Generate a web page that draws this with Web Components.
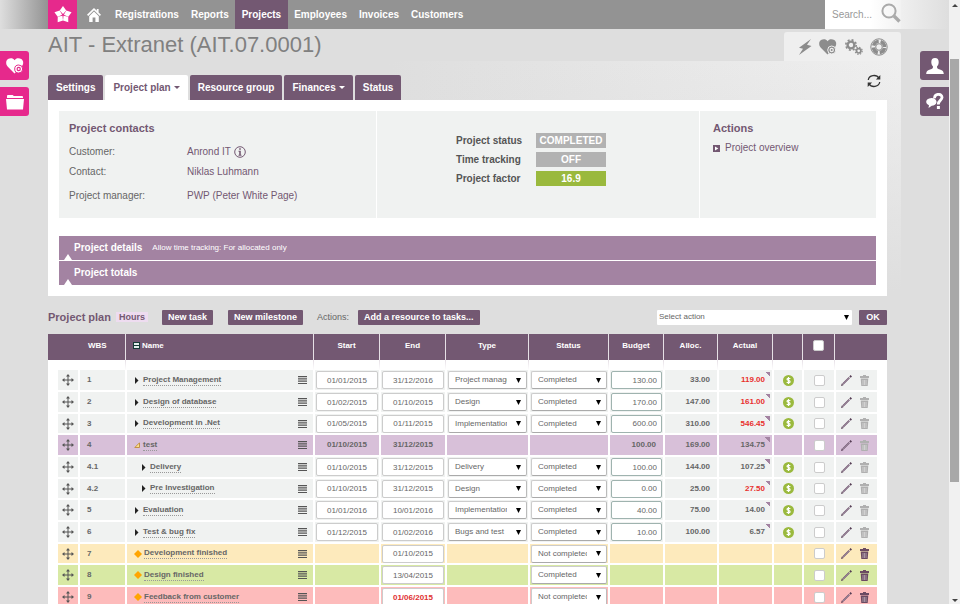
<!DOCTYPE html>
<html lang="en">
<head>
<meta charset="utf-8">
<title>AIT - Extranet (AIT.07.0001)</title>
<style>
    body {
        margin: 0;
        height: 100vh;
        overflow: hidden;
        background: #dedede;
        color: #666;
        font: 9px/12px "Liberation Sans", Arial, sans-serif;
        --purple: #735872;
        --mauve: #a383a2;
        --pink: #e6298c;
        --cell: #f0f2f1;
    }
</style>
</head>
<body>
<project-page></project-page>

<script>
const ICONS = {
    flower: ['-10 -10 20 20', '<g fill="#fff">' + [0, 72, 144, 216, 288].map(a =>
        `<path transform="rotate(${a})" d="M0-1L-3.600-5L0-10L3.600-5z"/>`).join('') + '</g>'],
    home: ['0 0 14 14', '<path fill="currentColor" d="M7 0L0 6.7L1.2 7.9L7 2.3L12.8 7.9L14 6.7L11.6 4.4V1H9.8V2.7zM7 3.6L2.2 8.2V14H5.6V9.6H8.4V14H11.8V8.2z"/>'],
    search: ['0 0 20 20', '<g fill="none" stroke="#aaa"><circle cx="8" cy="8" r="6.6" stroke-width="2"/><path d="M13 13L18.5 18.5" stroke-width="3.4"/></g>'],
    heart: ['0 0 18 16', '<path fill="currentColor" d="M8.5 15.5L1.6 8.5C-.5 6-.2 2.600 2 1.100C4.300-.3 7-.1 8.500 2.200C10-.1 13-.4 15.300 1.100C17.300 2.500 17.700 5 16.600 7.200z"/><circle cx="12.700" cy="11" r="4" fill="currentColor" stroke="var(--back)" stroke-width="1"/><circle cx="12.700" cy="11" r="1.600" fill="none" stroke="var(--back)" stroke-width="1.200"/>'],
    folder: ['0 0 18 16', '<path fill="currentColor" d="M1 3V1.800Q1 1 2 1H6.500Q7.500 1 7.500 2H16Q17 2 17 3V4H1zM0 5H18L17 15.500H1z"/>'],
    bolt: ['0 0 14 16', '<path fill="currentColor" d="M13 0L1 8.800L5 9.800L1 16L13.500 7L9 5.800z"/>'],
    gears: ['0 0 18 16', '<g fill="none" stroke="currentColor"><circle cx="6" cy="6" r="3.400" stroke-width="2.400"/><circle cx="6" cy="6" r="5.200" stroke-width="1.600" stroke-dasharray="2 2.080"/><circle cx="13.700" cy="11.800" r="2.200" stroke-width="1.700"/><circle cx="13.700" cy="11.800" r="3.500" stroke-width="1.200" stroke-dasharray="1.400 1.350"/></g>'],
    lifebuoy: ['0 0 18 18', '<g fill="none" stroke="currentColor"><circle cx="9" cy="9" r="8.200" stroke-width="1"/><circle cx="9" cy="9" r="3.300" stroke-width="1"/><circle cx="9" cy="9" r="5.600" stroke-width="3.400" stroke-dasharray="6.800 1.996" stroke-dashoffset="-1"/></g>'],
    refresh: ['0 0 14 14', '<g fill="none" stroke="#333" stroke-width="1.300"><path d="M1.300 6A5.700 5 0 0 1 12 4.200M12.700 8A5.700 5 0 0 1 2 9.800"/></g><path fill="#333" d="M13.300 1V5.400H8.900zM.7 13V8.600H5.100z"/>'],
    person: ['0 0 18 16', '<path fill="currentColor" d="M9 0C11.500 0 12.800 1.600 12.700 4.200C12.600 6.500 11.800 7.600 11 8.500C11 10 11.300 10.600 13 11.200C16 12.200 17.600 12.700 17.800 16H.2C.4 12.700 2 12.200 5 11.200C6.700 10.600 7 10 7 8.500C6.200 7.600 5.400 6.500 5.300 4.200C5.200 1.600 6.500 0 9 0z"/>'],
    help: ['0 0 18 17', '<path fill="none" stroke="currentColor" stroke-width="2.800" d="M8.600 5.400C8 0 16.400.2 16 4.700C15.700 7.600 12.300 7.400 12.300 11.400"/><rect x="10.900" y="13" width="3" height="3" fill="currentColor"/><path fill="currentColor" d="M5.500 5C9 5 10.700 7 10.500 9.200C10.300 11.500 8 12.700 5.800 12.700L2.500 15L3 12.300C-1.300 10.700-.8 5.200 5.500 5z"/>'],
    info: ['0 0 12 12', '<circle cx="6" cy="6" r="5.300" fill="none" stroke="#735872" stroke-width="1"/><path fill="#735872" d="M5.200 2.300H6.800V3.800H5.200zM4.500 4.800H6.800V8.800H7.500V9.700H4.500V8.800H5.200V5.700H4.500z"/>'],
    play: ['0 0 7 7', '<path fill="#735872" d="M0 0H7V7H0z"/><path fill="#fff" d="M2 1.400V5.600L5.300 3.500z"/>'],
    move: ['0 0 12 12', '<path fill="none" stroke="#555" stroke-width="1" d="M6 1V11M1 6H11"/><path fill="#555" d="M6 0L8 2.500H4zM6 12L4 9.500H8zM0 6L2.500 4V8zM12 6L9.500 8V4z"/>'],
    menu: ['0 0 9 8', '<path fill="#555" d="M0 0H9V1.200H0zM0 2.300H9V3.500H0zM0 4.600H9V5.800H0zM0 6.900H9V8H0z"/>'],
    closed: ['0 0 5 7', '<path fill="#222" d="M1 0L4.500 3.500L1 7z"/>'],
    open: ['0 0 6 6', '<path fill="#fbe08a" stroke="#c08a3a" stroke-width=".9" d="M5.500.8V5.500H.8z"/>'],
    milestone: ['0 0 8 8', '<path fill="#ffa500" d="M4 0L8 4L4 8L0 4z"/>'],
    collapse: ['0 0 7 7', '<path fill="#173b36" d="M0 0H7V7H0z"/><path fill="#e3efec" d="M1 1H6V3H1zM1 4H6V6H1z"/>'],
    dollar: ['0 0 11 11', '<circle cx="5.500" cy="5.500" r="5.500" fill="#9ab93d"/><path fill="none" stroke="#fff" stroke-width="1.200" d="M7.300 3.900C6.600 3 4 3 4 4.300C4 5.800 7.100 5.100 7.100 6.700C7.100 8 4.400 8 3.700 7M5.500 2V9"/>'],
    pencil: ['0 0 11 11', '<path fill="none" stroke="#735872" stroke-width="1.800" d="M1.800 9.200L8.300 2.700"/><path fill="none" stroke="#b9a9b8" stroke-width=".5" d="M2 9L8 3"/><path fill="#553d54" d="M0 11L.8 8.600L2.400 10.200zM8.300 1.400L9.600 0L11 1.400L9.700 2.700z"/>'],
    trash: ['0 0 9 11', '<path fill="currentColor" d="M3 0H6V1H9V3H0V1H3zM.7 3.600H8.300L7.700 11H1.300z"/><path fill="none" stroke="#fff" stroke-opacity=".6" stroke-width=".7" d="M3 5V10M4.500 5V10M6 5V10"/>']
};

class AppIcon extends HTMLElement {
    constructor() {
        super();
        this.attachShadow({ mode: 'open' });
    }

    connectedCallback() {
        const [box, shapes] = ICONS[this.getAttribute('name')];
        const [, , w, h] = box.split(' ');
        this.shadowRoot.innerHTML = `
            <style>
                :host { display: inline-block; flex: none; }
                svg { display: block; }
            </style>
            <svg width="${this.getAttribute('width') || w}" height="${this.getAttribute('height') || h}" viewBox="${box}" aria-hidden="true">${shapes}</svg>
        `;
    }
}

class TopNav extends HTMLElement {
    constructor() {
        super();
        this.attachShadow({ mode: 'open' });
        this.shadowRoot.innerHTML = `
            <style>
                :host {
                    display: flex;
                    height: 29px;
                    padding: 0 48px;
                    background:
                        linear-gradient(to right, #efefef, #dedede) right / 48px 100% no-repeat,
                        linear-gradient(to right, #dedede, #939393 48px);
                }
                nav { display: flex; flex: 1; }
                a {
                    display: flex;
                    align-items: center;
                    padding: 0 6px;
                    color: #fff;
                    font-size: 10px;
                    font-weight: bold;
                    text-decoration: none;
                }
                a.logo { background: var(--pink); width: 29px; padding: 0; justify-content: center; }
                a.home { padding: 0 8px 0 10px; }
                a.current { background: var(--purple); padding: 0 7px; }
                form {
                    display: flex;
                    align-items: center;
                    width: 76px;
                    background: linear-gradient(to right, #fff 60%, #f2f2f2);
                }
                input {
                    flex: 1;
                    min-width: 0;
                    border: 0;
                    padding: 0 0 0 7px;
                    background: none;
                    font: inherit;
                    font-size: 10px;
                    outline: 0;
                }
                input::placeholder { color: #999; }
                button { border: 0; padding: 0; background: none; }
            </style>
            <nav>
                <a class="logo" href="#" aria-label="Start"><app-icon name="flower" width="18" height="18"></app-icon></a>
                <a class="home" href="#" aria-label="Home"><app-icon name="home"></app-icon></a>
                <a href="#">Registrations</a>
                <a href="#">Reports</a>
                <a href="#" class="current">Projects</a>
                <a href="#">Employees</a>
                <a href="#">Invoices</a>
                <a href="#">Customers</a>
            </nav>
            <form>
                <input type="text" placeholder="Search..." aria-label="Search">
                <button type="button" aria-label="Search"><app-icon name="search"></app-icon></button>
            </form>
        `;
    }
}

class SideRail extends HTMLElement {
    constructor() {
        super();
        this.attachShadow({ mode: 'open' });
        this.shadowRoot.innerHTML = `
            <style>
                :host {
                    display: flex;
                    flex-direction: column;
                    gap: 7px;
                    width: 48px;
                    padding-top: 22px;
                    --back: var(--pink);
                    --round: 0 3px 3px 0;
                }
                :host([side="right"]) { align-items: flex-end; --back: var(--purple); --round: 3px 0 0 3px; }
                ::slotted(button) {
                    display: flex;
                    align-items: center;
                    justify-content: center;
                    width: 29px;
                    height: 29px;
                    padding: 0;
                    border: 0;
                    border-radius: var(--round);
                    background: var(--back);
                    color: #fff;
                }
            </style>
            <slot></slot>
        `;
    }
}

class PageTabs extends HTMLElement {
    constructor() {
        super();
        this.attachShadow({ mode: 'open' });
        this.shadowRoot.innerHTML = `
            <style>
                :host { display: flex; gap: 2px; }
                ::slotted(a) {
                    padding: 0 8px;
                    border-radius: 2px 2px 0 0;
                    background: var(--purple);
                    color: #fff;
                    font-size: 10px;
                    font-weight: bold;
                    line-height: 25px;
                    text-decoration: none;
                }
                ::slotted(a.current) { background: #fff; color: var(--purple); }
                ::slotted(a.menu)::after {
                    content: "";
                    display: inline-block;
                    margin-left: 3px;
                    border: 3px solid transparent;
                    border-top-color: currentColor;
                    border-bottom: 0;
                    vertical-align: 2px;
                }
            </style>
            <slot></slot>
        `;
    }
}

class ProjectSummary extends HTMLElement {
    constructor() {
        super();
        this.attachShadow({ mode: 'open' });
        this.shadowRoot.innerHTML = `
            <style>
                :host { display: grid; grid-template-columns: 317fr 322fr 176fr; gap: 1px; }
                section { background: var(--cell); padding: 10px 10px 8px; }
                section:last-child { padding-left: 13px; }
                h2 { margin: 0; color: var(--purple); font-size: 11px; line-height: 14px; }
                dl { display: grid; margin: 0; align-items: center; }
                dd { margin: 0; }
                .contacts dl {
                    grid-template-columns: 118px 1fr;
                    grid-template-rows: 20px 20px 28px;
                    margin-top: 7px;
                    font-size: 10px;
                }
                .contacts dd { display: flex; gap: 3px; align-items: center; color: var(--purple); }
                .state dl {
                    grid-template-columns: 80px 70px;
                    gap: 4px 0;
                    margin: 12px 0 0 69px;
                    font-size: 10px;
                    font-weight: bold;
                }
                .state dt { color: #555; white-space: nowrap; }
                .state dd { background: #b2b2b2; color: #fff; line-height: 15px; text-align: center; }
                .state dd.good { background: #9ab93d; }
                a { display: flex; gap: 5px; align-items: center; margin-top: 7px; color: var(--purple); font-size: 10px; text-decoration: none; white-space: nowrap; }
            </style>
            <section class="contacts">
                <h2>Project contacts</h2>
                <dl>
                    <dt>Customer:</dt><dd>Anrond IT <app-icon name="info"></app-icon></dd>
                    <dt>Contact:</dt><dd>Niklas Luhmann</dd>
                    <dt>Project manager:</dt><dd>PWP (Peter White Page)</dd>
                </dl>
            </section>
            <section class="state">
                <dl>
                    <dt>Project status</dt><dd>COMPLETED</dd>
                    <dt>Time tracking</dt><dd>OFF</dd>
                    <dt>Project factor</dt><dd class="good">16.9</dd>
                </dl>
            </section>
            <section>
                <h2>Actions</h2>
                <a href="#"><app-icon name="play"></app-icon>Project overview</a>
            </section>
        `;
    }
}

class FoldBar extends HTMLElement {
    constructor() {
        super();
        this.attachShadow({ mode: 'open' });
        this.shadowRoot.innerHTML = `
            <style>
                :host { display: block; }
                button {
                    display: flex;
                    align-items: center;
                    gap: 10px;
                    position: relative;
                    width: 100%;
                    height: 24px;
                    padding: 0 15px;
                    border: 0;
                    background: var(--mauve);
                    color: #fff;
                    font: inherit;
                    font-size: 8px;
                }
                b { font-size: 10px; }
                button::after {
                    content: "";
                    position: absolute;
                    left: 5px;
                    bottom: 0;
                    border: 4px solid transparent;
                    border-bottom: 6px solid #fff;
                    border-top: 0;
                }
            </style>
            <button type="button"><b></b><slot></slot></button>
        `;
    }

    connectedCallback() {
        this.shadowRoot.querySelector('b').textContent = this.getAttribute('heading');
    }
}

class PlanToolbar extends HTMLElement {
    constructor() {
        super();
        this.attachShadow({ mode: 'open' });
        this.shadowRoot.innerHTML = `
            <style>
                :host { display: flex; align-items: center; height: 38px; padding-top: 4px; box-sizing: border-box; }
                h2 { margin: 0 5px 0 0; color: var(--purple); font-size: 11px; }
                .unit { padding: 0 3px; background: #eedcf0; color: var(--purple); font-size: 9px; font-weight: bold; line-height: 10px; }
                button {
                    min-width: 28px;
                    height: 15px;
                    padding: 0 6px;
                    border: 0;
                    border-radius: 1px;
                    background: var(--purple);
                    color: #fff;
                    font: bold 9px/15px "Liberation Sans", Arial, sans-serif;
                }
                .unit + button { margin: 0 15px 0 14px; }
                label { margin: 0 9px 0 14px; font-size: 9px; }
                select {
                    width: 195px;
                    height: 15px;
                    margin: 0 7px 0 auto;
                    padding: 0 14px 0 2px;
                    border: 0;
                    border-radius: 1px;
                    appearance: none;
                    color: #666;
                    font: inherit;
                    font-size: 8px;
                    background: #fff url("data:image/svg+xml,%3Csvg xmlns='http://www.w3.org/2000/svg' width='5' height='5'%3E%3Cpath d='M0 0H5L2.5 5z'/%3E%3C/svg%3E") right 3px center no-repeat;
                }
            </style>
            <h2>Project plan</h2>
            <span class="unit">Hours</span>
            <button type="button">New task</button>
            <button type="button">New milestone</button>
            <label for="add">Actions:</label>
            <button type="button" id="add">Add a resource to tasks...</button>
            <select aria-label="Select action"><option>Select action</option></select>
            <button type="button">OK</button>
        `;
    }
}

const TASKS = [
    { wbs: '1', name: 'Project Management', start: '01/01/2015', end: '31/12/2016', type: 'Project management', status: 'Completed', budget: '130.00', alloc: '33.00', actual: '119.00', over: true },
    { wbs: '2', name: 'Design of database', start: '01/02/2015', end: '01/10/2015', type: 'Design', status: 'Completed', budget: '170.00', alloc: '147.00', actual: '161.00', over: true },
    { wbs: '3', name: 'Development in .Net', start: '01/05/2015', end: '01/11/2015', type: 'Implementation', status: 'Completed', budget: '600.00', alloc: '310.00', actual: '546.45', over: true },
    { wbs: '4', name: 'test', kind: 'group', start: '01/10/2015', end: '31/12/2015', budget: '100.00', alloc: '169.00', actual: '134.75' },
    { wbs: '4.1', name: 'Delivery', child: true, start: '01/10/2015', end: '31/12/2015', type: 'Delivery', status: 'Completed', budget: '100.00', alloc: '144.00', actual: '107.25' },
    { wbs: '4.2', name: 'Pre Investigation', child: true, start: '01/10/2015', end: '31/12/2015', type: 'Design', status: 'Completed', budget: '0.00', alloc: '25.00', actual: '27.50', over: true },
    { wbs: '5', name: 'Evaluation', start: '01/01/2016', end: '10/01/2016', type: 'Implementation', status: 'Completed', budget: '40.00', alloc: '75.00', actual: '14.00' },
    { wbs: '6', name: 'Test & bug fix', start: '01/12/2015', end: '01/02/2016', type: 'Bugs and test', status: 'Completed', budget: '10.00', alloc: '100.00', actual: '6.57' },
    { wbs: '7', name: 'Development finished', kind: 'pending', end: '01/10/2015', status: 'Not completed' },
    { wbs: '8', name: 'Design finished', kind: 'done', end: '13/04/2015', status: 'Completed' },
    { wbs: '9', name: 'Feedback from customer', kind: 'late', end: '01/06/2015', status: 'Not completed' }
];

class PlanTable extends HTMLElement {
    constructor() {
        super();
        this.attachShadow({ mode: 'open' });
        this.shadowRoot.innerHTML = `
            <style>
                :host { display: block; background: #fff; padding-bottom: 10px; }
                table { width: 100%; table-layout: fixed; border-spacing: 0; font-size: 8px; font-weight: bold; }
                th, td { box-sizing: border-box; padding: 0; background-clip: padding-box; }
                th {
                    height: 36px;
                    border-left: 1px solid #e6e0e6;
                    border-bottom: 10px solid #fff;
                    background-color: var(--purple);
                    color: #fff;
                    padding-bottom: 3px;
                }
                th:first-child { border-left: 0; padding-left: 40px; text-align: left; }
                th.name { text-align: left; padding-left: 7px; }
                th.name app-icon { margin-right: 2px; vertical-align: -1px; }
                td { height: 22px; border: solid #fff; border-width: 0 0 2px 2px; background-color: var(--cell); line-height: 12px; }
                tr:nth-child(3n) td { height: 21px; }
                td.edge { border: 0; background: #fff; }
                td.edge + td { border-left: 0; }
                .group td:not(.edge) { background-color: #d8c0d9; }
                .pending td:not(.edge) { background-color: #fdeabc; }
                .done td:not(.edge) { background-color: #d8e9a4; }
                .late td:not(.edge) { background-color: #fdbbbb; }
                .late input[type="text"] { color: #e03030; font-weight: bold; }
                .drag, .pay, .pick, .date { text-align: center; }
                .drag app-icon, .pay app-icon { display: block; width: min-content; margin: 0 auto; }
                .wbs { padding-left: 7px; }
                .title { display: flex; align-items: center; padding: 0 6px 0 7px; }
                .title app-icon { width: 9px; }
                .child .title { padding-left: 14px; }
                .title a { border-bottom: 1px dotted #999; color: #666; line-height: 10px; text-decoration: none; }
                .pending a, .done a, .late a { margin-left: 1px; }
                .title button { margin-left: auto; }
                .num { text-align: right; padding-right: 7px; }
                .over { color: #e8302e; }
                .actual {
                    background-image: linear-gradient(to bottom left, var(--mauve) 50%, transparent 50%);
                    background-position: right 2px top 2px;
                    background-size: 5px 5px;
                    background-repeat: no-repeat;
                }
                input[type="text"], select {
                    display: block;
                    box-sizing: border-box;
                    width: calc(100% - 2px);
                    height: 18px;
                    margin: 0 1px;
                    padding: 0 4px;
                    border: 1px solid #ccc;
                    border-radius: 2px;
                    background: #fff;
                    color: #666;
                    font: inherit;
                    font-weight: normal;
                    text-align: center;
                }
                .budget input[type="text"] { border-color: #9fb3af; text-align: right; }
                select {
                    appearance: none;
                    padding: 0 19px 0 6px;
                    border-bottom-color: #aaa;
                    border-right-color: #bbb;
                    text-align: left;
                    background: #fff url("data:image/svg+xml,%3Csvg xmlns='http://www.w3.org/2000/svg' width='5' height='5'%3E%3Cpath d='M0 0H5L2.5 5z'/%3E%3C/svg%3E") right 5px center no-repeat;
                }
                input[type="checkbox"] {
                    display: block;
                    appearance: none;
                    width: 11px;
                    height: 11px;
                    margin: 0 auto;
                    border: 1px solid #ccc;
                    border-radius: 2px;
                    background: #fff;
                }
                button { display: inline-flex; padding: 0; border: 0; background: none; color: #b0b0b0; }
                .pending button, .done button, .late button { color: #6b4a62; }
                .tools div { display: flex; justify-content: space-between; padding: 0 8px 0 5px; }
            </style>
            <table>
                <colgroup>
                    <col width="10"><col width="20"><col width="47"><col><col width="66"><col width="66">
                    <col width="83"><col width="80"><col width="55"><col width="54"><col width="55">
                    <col width="30"><col width="32"><col width="43"><col width="10">
                </colgroup>
                <thead>
                    <tr>
                        <th colspan="3">WBS</th>
                        <th class="name"><app-icon name="collapse"></app-icon>Name</th>
                        <th>Start</th><th>End</th><th>Type</th><th>Status</th>
                        <th>Budget</th><th>Alloc.</th><th>Actual</th><th></th>
                        <th><input type="checkbox" aria-label="Select all"></th>
                        <th colspan="2"></th>
                    </tr>
                </thead>
                <tbody></tbody>
            </table>
        `;
    }

    connectedCallback() {
        this.shadowRoot.querySelector('tbody').innerHTML = TASKS.map(task => this.row(task)).join('');
    }

    row(task) {
        const milestone = !task.start;
        const group = task.kind === 'group';
        const marker = milestone ? 'milestone' : group ? 'open' : 'closed';
        const text = (value, label) => !value ? '' : group ? value :
            `<input type="text" value="${value}" aria-label="${label}">`;
        const list = (value, label) => value ?
            `<select aria-label="${label}"><option>${value}</option></select>` : '';

        return `
            <tr class="${task.kind || ''} ${task.child ? 'child' : ''}">
                <td class="edge"></td>
                <td class="drag"><app-icon name="move"></app-icon></td>
                <td class="wbs">${task.wbs}</td>
                <td><div class="title">
                    <app-icon name="${marker}"></app-icon>
                    <a href="#">${task.name.replace('&', '&amp;')}</a>
                    <button type="button" aria-label="Menu"><app-icon name="menu"></app-icon></button>
                </div></td>
                <td class="date">${text(task.start, 'Start')}</td>
                <td class="date">${text(task.end, 'End')}</td>
                <td>${list(task.type, 'Type')}</td>
                <td>${list(task.status, 'Status')}</td>
                <td class="budget ${group ? 'num' : ''}">${text(task.budget, 'Budget')}</td>
                <td class="num">${task.alloc || ''}</td>
                <td class="num ${milestone ? '' : 'actual'} ${task.over ? 'over' : ''}">${task.actual || ''}</td>
                <td class="pay">${milestone || group ? '' : '<app-icon name="dollar"></app-icon>'}</td>
                <td class="pick"><input type="checkbox" aria-label="Select ${task.wbs}"></td>
                <td class="tools"><div>
                    <button type="button" aria-label="Edit"><app-icon name="pencil"></app-icon></button>
                    <button type="button" aria-label="Delete"><app-icon name="trash"></app-icon></button>
                </div></td>
                <td class="edge"></td>
            </tr>
        `;
    }
}

class PageScrollbar extends HTMLElement {
    constructor() {
        super();
        this.attachShadow({ mode: 'open' });
        this.shadowRoot.innerHTML = `
            <style>
                :host { display: flex; flex-direction: column; align-items: center; width: 11px; background: #f1f1f1; }
                i { border: 3px solid transparent; }
                .up { border-bottom-color: #444; border-top: 0; margin: 4px 0 52px; }
                .down { border-top-color: #444; border-bottom: 0; margin: auto 0 2px; }
                .thumb { width: 9px; height: 70%; background: #a8a8a8; }
            </style>
            <i class="up"></i>
            <div class="thumb"></div>
            <i class="down"></i>
        `;
    }
}

class ProjectPage extends HTMLElement {
    constructor() {
        super();
        this.attachShadow({ mode: 'open' });
        this.shadowRoot.innerHTML = `
            <style>
                :host { display: flex; height: 100%; }
                .page { flex: 1; min-width: 0; overflow: hidden; }
                .columns { display: flex; }
                main { flex: 1; min-width: 0; }
                header { display: flex; justify-content: space-between; align-items: flex-end; height: 32px; }
                h1 { margin: 0; color: #808080; font-size: 22px; font-weight: normal; line-height: 32px; }
                .tools {
                    display: flex;
                    align-items: center;
                    justify-content: space-between;
                    box-sizing: border-box;
                    width: 117px;
                    height: 29px;
                    padding: 0 13px 0 14px;
                    border-radius: 3px 3px 0 0;
                    background: #efefef;
                    color: #8c8c8c;
                    --back: #efefef;
                }
                .tools button, .refresh { display: flex; padding: 0; border: 0; background: none; color: inherit; }
                .band {
                    padding: 14px 14px 0 0;
                    background:
                        linear-gradient(to bottom, #dedede00, #dedede 230px),
                        linear-gradient(to right, #dedede 40%, #efefef);
                }
                .head { display: flex; justify-content: space-between; }
                .refresh { margin: -1px 6px 0 0; }
                .panel { padding: 11px 11px 11px; background: #fff; }
                fold-bar { margin-top: 1px; }
                project-summary + fold-bar { margin-top: 18px; }
            </style>
            <div class="page">
                <top-nav></top-nav>
                <div class="columns">
                    <side-rail>
                        <button type="button" aria-label="Favourites"><app-icon name="heart"></app-icon></button>
                        <button type="button" aria-label="Files"><app-icon name="folder"></app-icon></button>
                    </side-rail>
                    <main>
                        <header>
                            <h1>AIT - Extranet (AIT.07.0001)</h1>
                            <div class="tools">
                                <button type="button" aria-label="Quick"><app-icon name="bolt"></app-icon></button>
                                <button type="button" aria-label="Favourite"><app-icon name="heart"></app-icon></button>
                                <button type="button" aria-label="Settings"><app-icon name="gears"></app-icon></button>
                                <button type="button" aria-label="Help"><app-icon name="lifebuoy"></app-icon></button>
                            </div>
                        </header>
                        <div class="band">
                            <div class="head">
                                <page-tabs>
                                    <a href="#">Settings</a>
                                    <a href="#" class="current menu">Project plan</a>
                                    <a href="#">Resource group</a>
                                    <a href="#" class="menu">Finances</a>
                                    <a href="#">Status</a>
                                </page-tabs>
                                <button type="button" class="refresh" aria-label="Refresh"><app-icon name="refresh"></app-icon></button>
                            </div>
                            <div class="panel">
                                <project-summary></project-summary>
                                <fold-bar heading="Project details">Allow time tracking: For allocated only</fold-bar>
                                <fold-bar heading="Project totals"></fold-bar>
                            </div>
                            <plan-toolbar></plan-toolbar>
                            <plan-table></plan-table>
                        </div>
                    </main>
                    <side-rail side="right">
                        <button type="button" aria-label="Profile"><app-icon name="person"></app-icon></button>
                        <button type="button" aria-label="Support"><app-icon name="help"></app-icon></button>
                    </side-rail>
                </div>
            </div>
            <page-scrollbar></page-scrollbar>
        `;
    }
}

customElements.define('app-icon', AppIcon);
customElements.define('top-nav', TopNav);
customElements.define('side-rail', SideRail);
customElements.define('page-tabs', PageTabs);
customElements.define('project-summary', ProjectSummary);
customElements.define('fold-bar', FoldBar);
customElements.define('plan-toolbar', PlanToolbar);
customElements.define('plan-table', PlanTable);
customElements.define('page-scrollbar', PageScrollbar);
customElements.define('project-page', ProjectPage);
</script>
</body>
</html>
